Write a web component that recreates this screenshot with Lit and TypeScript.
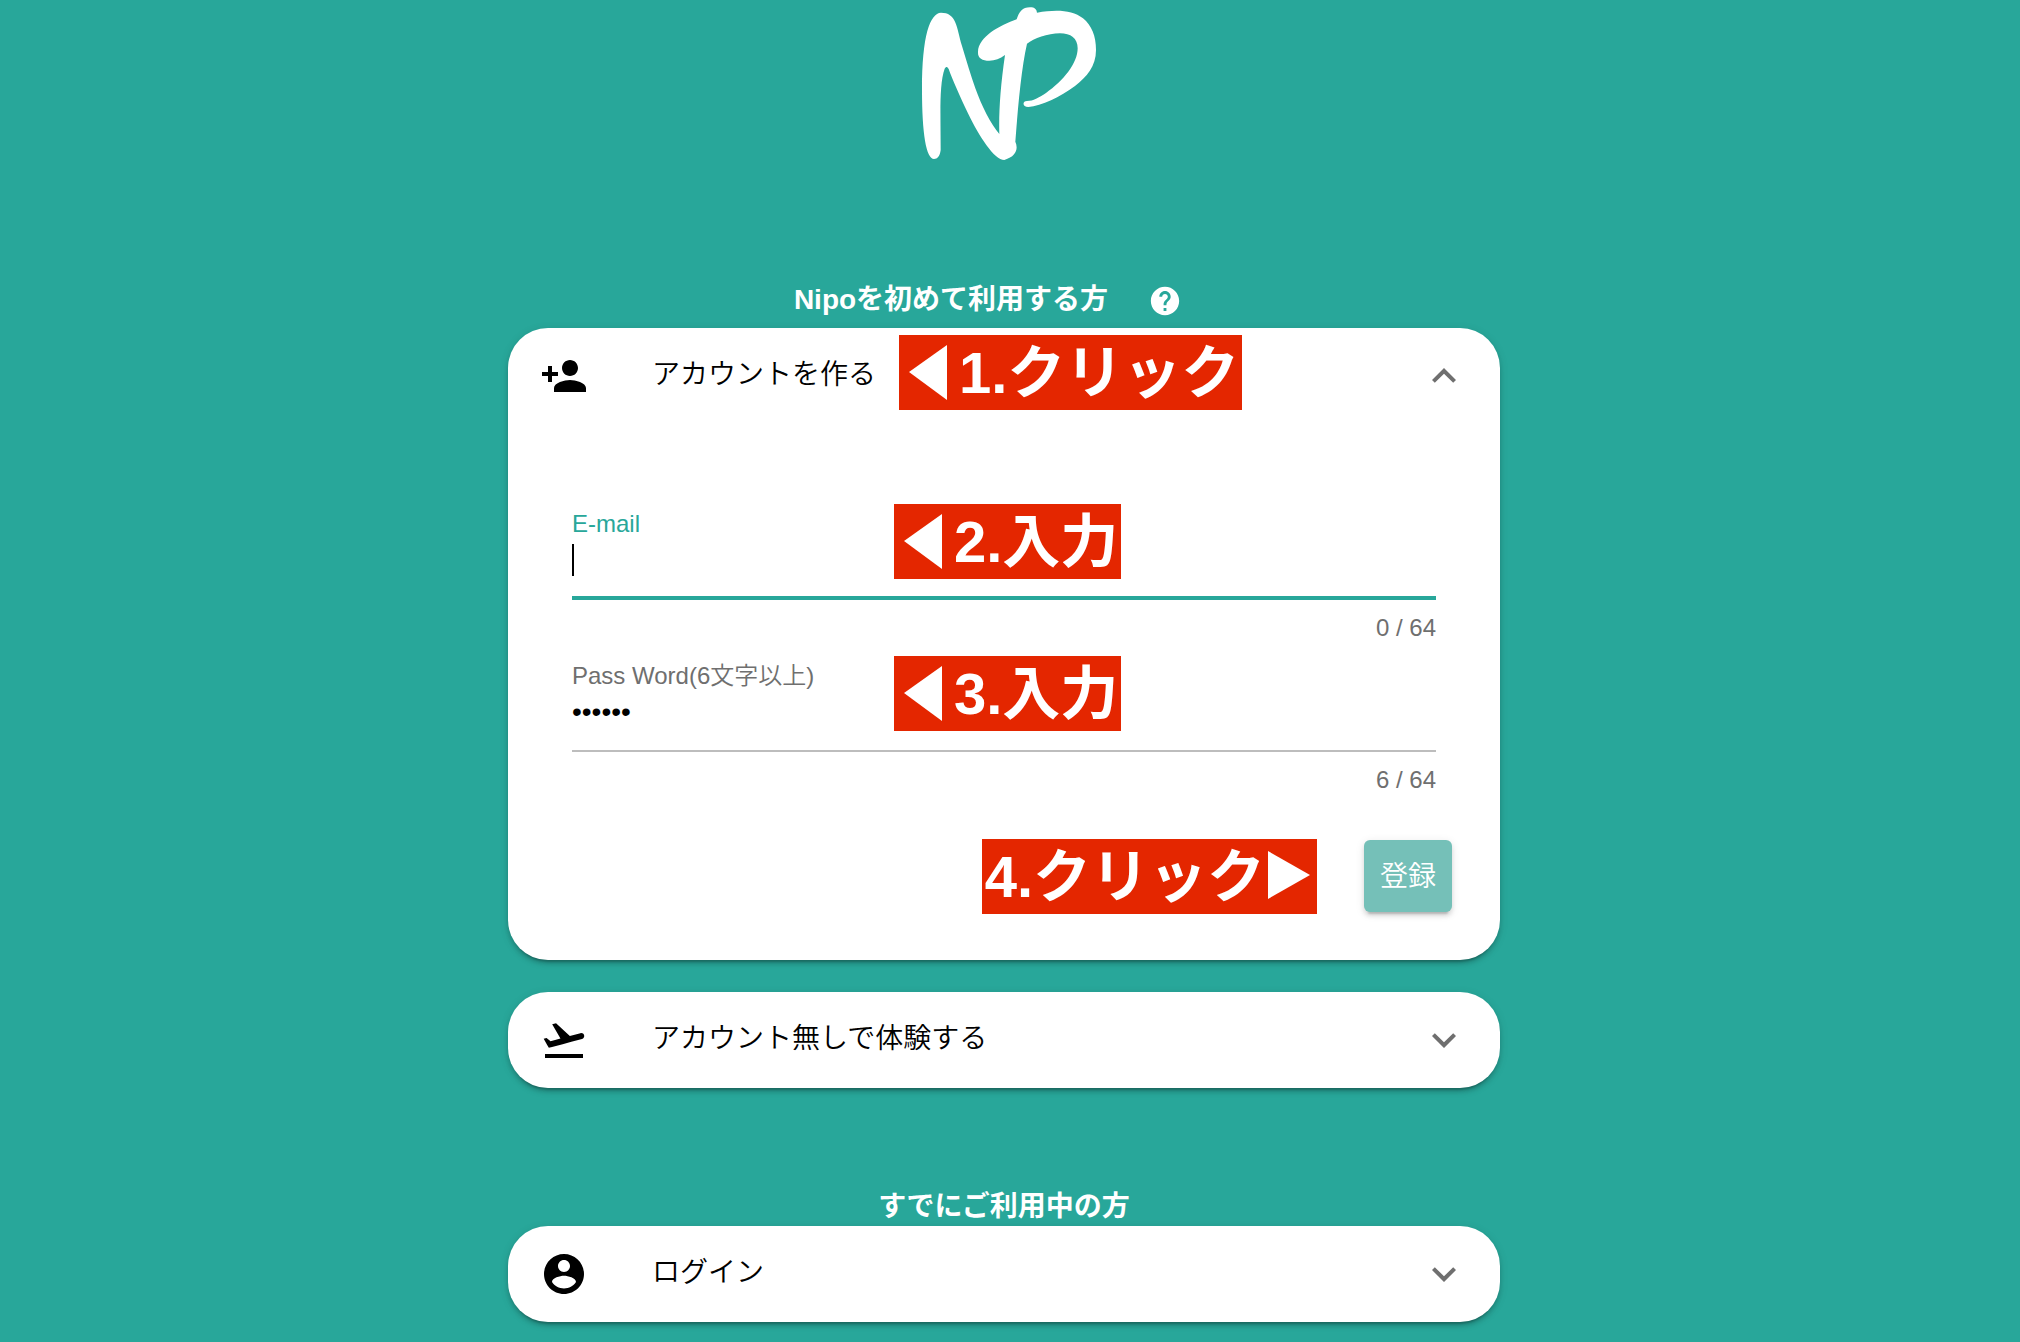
import { LitElement, html, css, svg } from "lit";
import { customElement, property, state } from "lit/decorators.js";

const ICONS: Record<string, string> = {
  personAdd:
    "M15 12c2.21 0 4-1.79 4-4s-1.79-4-4-4-4 1.79-4 4 1.79 4 4 4zm-9-2V7H4v3H1v2h3v3h2v-3h3v-2H6zm9 4c-2.67 0-8 1.34-8 4v2h16v-2c0-2.66-5.33-4-8-4z",
  takeoff:
    "M2.5 19h19v2h-19zm19.57-9.36c-.21-.8-1.04-1.28-1.84-1.06L14.92 10l-6.9-6.43-1.93.51 4.14 7.17-4.97 1.33-1.97-1.54-1.45.39 1.82 3.16.77 1.33 1.6-.43 5.31-1.42 4.35-1.16L21 11.49c.81-.23 1.28-1.05 1.07-1.85z",
  account:
    "M12 2C6.48 2 2 6.48 2 12s4.48 10 10 10 10-4.48 10-10S17.52 2 12 2zm0 3c1.66 0 3 1.34 3 3s-1.34 3-3 3-3-1.34-3-3 1.34-3 3-3zm0 14.2c-2.5 0-4.71-1.28-6-3.22.03-1.99 4-3.08 6-3.08 1.99 0 5.97 1.09 6 3.08-1.29 1.94-3.5 3.22-6 3.22z",
  help:
    "M12 2C6.48 2 2 6.48 2 12s4.48 10 10 10 10-4.48 10-10S17.52 2 12 2zm1 17h-2v-2h2v2zm2.07-7.75l-.9.92C13.45 12.9 13 13.5 13 15h-2v-.5c0-1.1.45-2.1 1.17-2.83l1.24-1.26c.37-.36.59-.86.59-1.41 0-1.1-.9-2-2-2s-2 .9-2 2H8c0-2.21 1.79-4 4-4s4 1.79 4 4c0 .88-.36 1.68-.93 2.25z",
  more: "M16.59 8.59L12 13.17 7.41 8.59 6 10l6 6 6-6z",
  less: "M12 8l-6 6 1.41 1.41L12 10.83l4.59 4.58L18 14z",
};

const icon = (name: string) => html`
  <svg class="icon" viewBox="0 0 24 24" aria-hidden="true">${svg`<path d=${ICONS[name]} />`}</svg>
`;

const arrowLeft = html`
  <svg class="arrow-left" viewBox="0 0 60 75" aria-hidden="true"><path d="M10 37L48 10V65Z" /></svg>
`;

const arrowRight = html`
  <svg class="arrow-right" viewBox="0 0 52 75" aria-hidden="true"><path d="M3 12L45 36L3 60Z" /></svg>
`;

@customElement("expansion-card")
class ExpansionCard extends LitElement {
  static styles = css`
    :host {
      display: block;
      position: relative;
      background: #fff;
      border-radius: 40px;
      box-shadow:
        0 6px 2px -4px rgba(0, 0, 0, 0.2),
        0 4px 4px rgba(0, 0, 0, 0.14),
        0 2px 10px rgba(0, 0, 0, 0.12);
    }
    .header {
      display: flex;
      align-items: center;
      width: 100%;
      height: 96px;
      padding: 0 32px;
      border: 0;
      border-radius: 40px;
      background: none;
      color: #000;
      font: inherit;
      font-size: 28px;
      font-weight: 350;
      line-height: 40px;
      text-align: left;
      cursor: pointer;
    }
    .icon {
      flex: none;
      width: 48px;
      height: 48px;
      fill: currentColor;
    }
    .title {
      flex: 1;
      padding-left: 64px;
      padding-bottom: 2px;
    }
    .chevron {
      display: flex;
      color: #6f6f6f;
    }
  `;

  @property() icon = "";
  @property() heading = "";
  @property({ type: Boolean }) open = false;

  render() {
    return html`
      <button
        class="header"
        type="button"
        aria-expanded=${this.open ? "true" : "false"}
        @click=${() => (this.open = !this.open)}
      >
        ${icon(this.icon)}
        <span class="title">${this.heading}</span>
        <span class="chevron">${icon(this.open ? "less" : "more")}</span>
      </button>
      ${this.open ? html`<slot></slot>` : null}
    `;
  }
}

@customElement("app-root")
class AppRoot extends LitElement {
  static styles = css`
    :host {
      display: block;
      min-height: 100vh;
      background: #28a79a;
      font-family: "Liberation Sans", "Noto Sans CJK JP", sans-serif;
    }
    * {
      box-sizing: border-box;
    }
    .brand {
      display: flex;
      justify-content: center;
      height: 274px;
    }
    .logo {
      width: 220px;
      height: 180px;
      fill: #fff;
    }
    .content {
      max-width: 1004px;
      margin: 0 auto;
      padding-right: 12px;
    }
    .section-title {
      display: flex;
      justify-content: center;
      align-items: center;
      margin: 0;
      color: #fff;
      font-size: 28px;
      font-weight: 700;
      line-height: 38px;
    }
    .with-help {
      gap: 40px;
      height: 54px;
      padding-right: 32px;
    }
    .with-help span {
      padding-bottom: 2px;
    }
    .returning {
      margin-top: 100px;
    }
    .help {
      display: flex;
      padding: 0;
      border: 0;
      background: none;
      color: #fff;
      cursor: pointer;
    }
    .help .icon {
      width: 34px;
      height: 34px;
      fill: currentColor;
    }
    .trial {
      margin-top: 32px;
    }
    .form {
      padding: 86px 64px 48px;
    }
    .field {
      position: relative;
      margin-bottom: 20px;
      color: #6f6f6f;
      font-size: 24px;
      font-weight: 350;
      line-height: 28px;
    }
    .label {
      display: block;
    }
    .field.focused .label {
      color: #28a79a;
    }
    .control {
      height: 56px;
      margin-top: 6px;
      margin-bottom: 14px;
      border-bottom: 2px solid #bdbdbd;
    }
    .focused .control {
      border-bottom: 4px solid #28a79a;
    }
    .input {
      display: block;
      width: 100%;
      height: 32px;
      padding: 0;
      border: 0;
      outline: 0;
      background: none;
      color: #000;
      font: inherit;
      font-size: 28px;
    }
    .focused .input {
      border-left: 2px solid #000;
    }
    .counter {
      text-align: right;
    }
    .actions {
      display: flex;
      justify-content: flex-end;
      align-items: center;
      gap: 47px;
      height: 72px;
      margin-top: 46px;
      margin-right: -16px;
    }
    .submit {
      width: 88px;
      height: 72px;
      padding: 0 0 4px;
      border: 0;
      border-radius: 6px;
      background: #75c0b8;
      color: #fff;
      font: inherit;
      font-size: 28px;
      font-weight: 350;
      box-shadow:
        0 6px 2px -4px rgba(0, 0, 0, 0.16),
        0 4px 4px rgba(0, 0, 0, 0.1),
        0 2px 10px rgba(0, 0, 0, 0.1);
    }
    .badge {
      display: flex;
      height: 75px;
      padding-right: 3px;
      background: #e42600;
      color: #fff;
      fill: #fff;
      font-size: 58px;
      font-weight: 700;
      line-height: 75px;
      white-space: nowrap;
    }
    .badge.before-submit {
      padding: 0 0 0 3px;
    }
    .arrow-left {
      width: 60px;
      height: 75px;
    }
    .arrow-right {
      width: 52px;
      height: 75px;
    }
    .on-header {
      position: absolute;
      top: 7px;
      left: 391px;
    }
    .on-field {
      position: absolute;
      top: -6px;
      left: 322px;
    }
  `;

  @state() private email = "";
  @state() private password = "secret";

  render() {
    return html`
      <header class="brand">
        <svg class="logo" viewBox="0 0 660 540" role="img" aria-label="NP">
          <path
            d="M123 38C145 38 158 48 165 65C175 88 176 105 186 138C200 184 212 225 226 265C245 318 272 372 298 402C296 340 301 260 315 165C300 177 285 182 268 182C246 182 233 174 234 156C235 110 300 76 350 58C357 36 367 22 390 22C404 22 410 28 411 38C470 28 516 30 549 55C575 76 588 108 588 150C588 200 560 230 525 258C480 292 425 317 385 321C367 321 366 303 381 303C400 303 416 293 438 279C490 243 533 190 533 145C533 115 512 100 480 100C442 100 402 116 381 131C364 205 354 320 346 425C355 445 350 470 313 480C283 480 238 410 205 342C180 290 158 240 146 207C142 199 138 199 134 206C117 255 122 340 122 450C120 468 112 477 102 477C78 477 66 400 66 270C66 105 90 40 123 38Z"
          />
        </svg>
      </header>
      <main class="content">
        <h2 class="section-title with-help">
          <span>Nipoを初めて利用する方</span>
          <button class="help" type="button" aria-label="ヘルプ">${icon("help")}</button>
        </h2>
        <expansion-card icon="personAdd" heading="アカウントを作る" open>
          <div class="badge on-header">${arrowLeft}<span>1.クリック</span></div>
          <form class="form" @submit=${(e: Event) => e.preventDefault()}>
            <div class="field focused">
              <label class="label" for="email">E-mail</label>
              <div class="control">
                <input
                  class="input"
                  id="email"
                  type="email"
                  maxlength="64"
                  .value=${this.email}
                  @input=${(e: Event) => (this.email = (e.target as HTMLInputElement).value)}
                />
              </div>
              <div class="counter">${this.email.length} / 64</div>
              <div class="badge on-field">${arrowLeft}<span>2.入力</span></div>
            </div>
            <div class="field">
              <label class="label" for="password">Pass Word(6文字以上)</label>
              <div class="control">
                <input
                  class="input"
                  id="password"
                  type="password"
                  maxlength="64"
                  .value=${this.password}
                  @input=${(e: Event) => (this.password = (e.target as HTMLInputElement).value)}
                />
              </div>
              <div class="counter">${this.password.length} / 64</div>
              <div class="badge on-field">${arrowLeft}<span>3.入力</span></div>
            </div>
            <div class="actions">
              <div class="badge before-submit"><span>4.クリック</span>${arrowRight}</div>
              <button class="submit" type="submit" disabled>登録</button>
            </div>
          </form>
        </expansion-card>
        <expansion-card class="trial" icon="takeoff" heading="アカウント無しで体験する"></expansion-card>
        <h2 class="section-title returning">すでにご利用中の方</h2>
        <expansion-card icon="account" heading="ログイン"></expansion-card>
      </main>
    `;
  }
}
